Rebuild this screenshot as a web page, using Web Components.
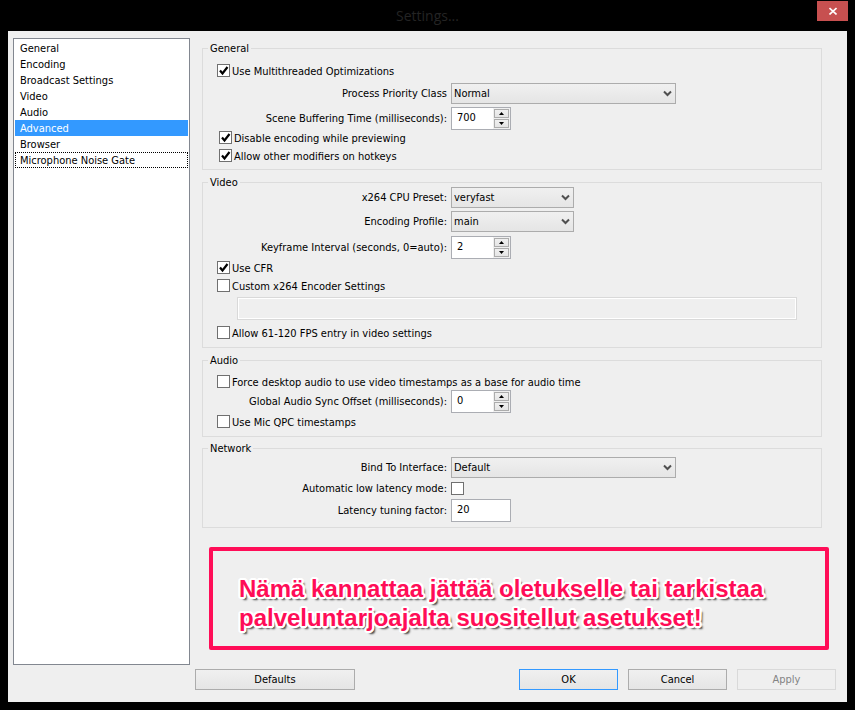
<!DOCTYPE html>
<html lang="fi">
<head>
<meta charset="utf-8">
<title>Settings...</title>
<style>
html, body { height: 100%; }
body { margin: 0; background: #000; color: #000; font: 11px/18px "DejaVu Sans Condensed", "DejaVu Sans", sans-serif; }
</style>
</head>
<body>
<settings-window></settings-window>
<script>
function define(name, build) {
  customElements.define(name, class extends HTMLElement {
    connectedCallback() {
      if (this.shadowRoot) return;
      const root = this.attachShadow({ mode: 'open' });
      root.innerHTML = '<style>*{box-sizing:border-box}button,input,select{font:inherit;color:inherit;margin:0;border-radius:0}</style>' + build(this);
    }
  });
}

define('title-bar', el => `
<style>
:host { display: grid; grid-template-columns: 1fr auto 1fr; height: 31px; padding-right: 7px; padding-left: 7px; }
h1 { grid-column: 2; margin: 0; align-self: center; font: 14px/31px "Open Sans", sans-serif; color: #242424; }
button { justify-self: end; margin-top: 1px; width: 31px; height: 20px; border: 0; padding: 0; background: #c75050; display: grid; place-items: center; }
</style>
<h1>${el.getAttribute('heading')}</h1>
<button aria-label="Close"><svg width="8" height="8" viewBox="0 0 8 8"><path d="M0.500 1L7.500 7.500M7.500 1L0.500 7.500" stroke="#fff" stroke-width="1.600"/></svg></button>`);

define('category-list', el => `
<style>
:host { display: block; background: #fff; border: 1px solid #828790; padding: 1px; }
ul { margin: 0; padding: 0; list-style: none; }
::slotted(li) { display: block; height: 16px; padding-left: 5px; }
::slotted(li[aria-current]) { background: #3399ff; color: #fff; }
::slotted(li.focused) { outline: 1px dotted #000; outline-offset: -1px; }
</style>
<ul><slot></slot></ul>`);

define('option-group', el => `
<style>
:host { display: block; }
fieldset { margin: 0; min-width: 0; border: 1px solid #dcdcdc; padding: var(--top) 0 var(--bottom) 0; }
legend { margin-left: 5px; padding: 0 2px; height: 9px; line-height: 9px; }
</style>
<fieldset><legend>${el.getAttribute('heading')}</legend><slot></slot></fieldset>`);

const tick = `<svg width="13" height="13" viewBox="0 0 13 13"><path d="M3 6.500L5.500 9.500L10.500 3" fill="none" stroke="#000" stroke-width="2.200"/></svg>`;
const boxCss = `
.box { display: grid; width: 13px; height: 13px; flex: none; margin-top: 1px; align-self: flex-start; }
.box > * { grid-area: 1 / 1; }
.box input { appearance: none; width: 13px; height: 13px; border: 1px solid #707070; background: #fff; }
.box svg { pointer-events: none; visibility: hidden; z-index: 1; }
.box input:checked + svg { visibility: visible; }`;

define('check-option', el => `
<style>
:host { display: block; margin-top: var(--gap, 0); padding-left: 14px; }
:host([indented]) { padding-left: 16px; }
label { display: flex; align-items: flex-start; gap: 2px; height: 16px; }
${boxCss}
</style>
<label><span class="box"><input type="checkbox" ${el.hasAttribute('checked') ? 'checked' : ''}>${tick}</span><span>${el.getAttribute('label')}</span></label>`);

define('field-row', el => {
  const kind = el.getAttribute('kind'), value = el.getAttribute('value');
  const control = {
    select: `<span class="combo"><select id="c"><option>${value}</option></select><svg width="9" height="7" viewBox="0 0 9 7"><path d="M1 1.500L4.500 5L8 1.500" fill="none" stroke="#505050" stroke-width="2"/></svg></span>`,
    spin: `<span class="spin"><input id="c" type="text" value="${value}"><span class="arrows"><button aria-label="Increase"><svg width="5" height="3"><path d="M0 3L2.500 0L5 3Z"/></svg></button><button aria-label="Decrease"><svg width="5" height="3"><path d="M0 0L2.500 3L5 0Z"/></svg></button></span></span>`,
    text: `<input id="c" class="text" type="text" value="${value}">`,
    check: `<span class="box"><input id="c" type="checkbox">${tick}</span>`
  }[kind];
  return `
<style>
:host { display: flex; align-items: center; gap: 4px; margin-top: var(--gap, 0); }
label { width: 244px; flex: none; text-align: right; white-space: nowrap; }
.combo { display: grid; width: 123px; }
:host([wide]) .combo { width: 225px; }
.combo > * { grid-area: 1 / 1; }
.combo svg { place-self: center end; margin-right: 4px; pointer-events: none; }
select { appearance: none; width: 100%; height: 21px; border: 1px solid #acacac; padding: 0 16px 0 2px; background: linear-gradient(#f0f0f0, #e5e5e5); }
.spin, .text { width: 60px; height: 23px; border: 1px solid #abadb3; background: #fff; }
.text { padding: 0 5px 2px; }
.spin { display: flex; }
.spin input { width: 41px; min-width: 0; border: 0; padding: 0 5px 2px; background: #fff; }
.arrows { display: grid; gap: 1px; flex: 1; padding: 1px; background: #f0f0f0; }
.arrows button { display: grid; place-items: center; height: 9px; padding: 0; border: 1px solid #acacac; background: linear-gradient(#f0f0f0, #e5e5e5); }
${boxCss}
:host([kind="check"]) { height: 16px; }
</style>
<label for="c">${el.getAttribute('label')}</label>${control}`;
});

define('disabled-field', el => `
<style>
:host { display: block; margin-top: var(--gap, 0); padding: 0 24px 0 34px; }
input { display: block; width: 100%; height: 23px; border: 1px solid #d9d9d9; background: #efefef; box-shadow: inset 0 0 0 1px #fff; }
</style>
<input type="text" disabled aria-label="${el.getAttribute('label')}">`);

define('callout-note', el => `
<style>
:host { display: block; border: 4px solid #ff0d57; border-radius: 2px; padding: 23px 26px 14px; }
p { margin: 0; font: bold 24px/29px "Liberation Sans", Arial, sans-serif; color: #ff0d57; white-space: pre-line;
  text-shadow: 2px 0 #fff, -2px 0 #fff, 0 2px #fff, 0 -2px #fff, 2px 1px #fff, -2px 1px #fff, 2px -1px #fff, -2px -1px #fff, 1px 2px #fff, -1px 2px #fff, 1px -2px #fff, -1px -2px #fff, 3px 3px 2px rgba(0,0,0,.75); }
</style>
<p><slot></slot></p>`);

define('push-button', el => `
<style>
:host { display: block; width: 99px; }
:host([wide]) { width: 160px; }
button { display: block; width: 100%; height: 21px; padding: 0; border: 1px solid #acacac; background: linear-gradient(#f0f0f0, #e5e5e5); }
button.primary { border-color: #3399ff; }
button:disabled { border-color: #d9d9d9; background: #efefef; color: #838383; }
</style>
<button class="${el.hasAttribute('primary') ? 'primary' : 'plain'}" ${el.hasAttribute('disabled') ? 'disabled' : ''}><slot></slot></button>`);

define('settings-window', () => `
<style>
:host { display: flex; flex-direction: column; min-height: 100%; padding: 0 0 8px; box-sizing: border-box; }
main { flex: 1; display: flex; flex-direction: column; margin: 0 8px; background: #efefef; }
.content { flex: 1; display: grid; grid-template-columns: 177px 1fr; gap: 12px; padding: 7px 18px 0 5px; }
.groups { padding-top: 6px; }
option-group { margin: 0 7px 0 0; }
.video { margin-top: 8px; }
.audio { margin-top: 8px; }
.network { margin-top: 7px; }
callout-note { margin: 19px 0 0 7px; }
footer { display: flex; gap: 10px; padding: 4px 11px 12px 187px; }
.spacer { flex: 1; }
</style>
<title-bar heading="Settings..."></title-bar>
<main>
  <div class="content">
    <category-list>
      <li>General</li><li>Encoding</li><li>Broadcast Settings</li><li>Video</li><li>Audio</li>
      <li aria-current="true">Advanced</li><li>Browser</li><li class="focused">Microphone Noise Gate</li>
    </category-list>
    <div class="groups">
      <option-group heading="General" style="--top:10px;--bottom:5px">
        <check-option label="Use Multithreaded Optimizations" checked></check-option>
        <field-row kind="select" wide label="Process Priority Class" value="Normal" style="--gap:4px"></field-row>
        <field-row kind="spin" label="Scene Buffering Time (milliseconds):" value="700" style="--gap:3px"></field-row>
        <check-option indented label="Disable encoding while previewing" checked></check-option>
        <check-option indented label="Allow other modifiers on hotkeys" checked style="--gap:2px"></check-option>
      </option-group>
      <option-group class="video" heading="Video" style="--top:0px;--bottom:6px">
        <field-row kind="select" label="x264 CPU Preset:" value="veryfast"></field-row>
        <field-row kind="select" label="Encoding Profile:" value="main" style="--gap:3px"></field-row>
        <field-row kind="spin" label="Keyframe Interval (seconds, 0=auto):" value="2" style="--gap:4px"></field-row>
        <check-option label="Use CFR" checked style="--gap:1px"></check-option>
        <check-option label="Custom x264 Encoder Settings" style="--gap:2px"></check-option>
        <disabled-field label="Custom x264 Encoder Settings" style="--gap:3px"></disabled-field>
        <check-option label="Allow 61-120 FPS entry in video settings" style="--gap:5px"></check-option>
      </option-group>
      <option-group class="audio" heading="Audio" style="--top:9px;--bottom:6px">
        <check-option label="Force desktop audio to use video timestamps as a base for audio time"></check-option>
        <field-row kind="spin" label="Global Audio Sync Offset (milliseconds):" value="0"></field-row>
        <check-option label="Use Mic QPC timestamps" style="--gap:1px"></check-option>
      </option-group>
      <option-group class="network" heading="Network" style="--top:4px;--bottom:5px">
        <field-row kind="select" wide label="Bind To Interface:" value="Default"></field-row>
        <field-row kind="check" label="Automatic low latency mode:" style="--gap:3px"></field-row>
        <field-row kind="text" label="Latency tuning factor:" value="20" style="--gap:2px"></field-row>
      </option-group>
      <callout-note>Nämä kannattaa jättää oletukselle tai tarkistaa
palveluntarjoajalta suositellut asetukset!</callout-note>
    </div>
  </div>
  <footer>
    <push-button wide>Defaults</push-button><span class="spacer"></span>
    <push-button primary>OK</push-button><push-button>Cancel</push-button><push-button disabled>Apply</push-button>
  </footer>
</main>`);
</script>
</body>
</html>
